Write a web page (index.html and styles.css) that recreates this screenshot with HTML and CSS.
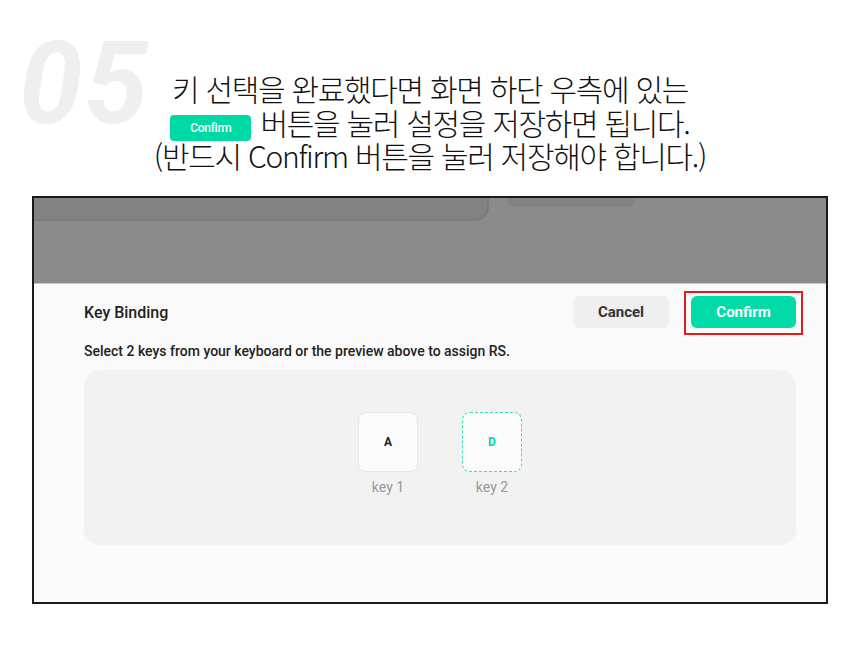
FILE: index.html
```html
<!DOCTYPE html>
<html lang="ko">
<head>
    <meta charset="UTF-8">
    <meta name="viewport" content="width=device-width, initial-scale=1.0">
    <title>Key Binding 05</title>
    <link rel="stylesheet" href="styles.css">
</head>
<body>
    <div class="step">
        <div class="step-num">05</div>
        <div class="step-text">
            <div class="step-line">키 선택을 완료했다면 화면 하단 우측에 있는</div>
            <div class="step-line"><span class="badge">Confirm</span> 버튼을 눌러 설정을 저장하면 됩니다.</div>
            <div class="step-line">(반드시 Confirm 버튼을 눌러 저장해야 합니다.)</div>
        </div>
    </div>
    <div class="shot">
        <div class="backdrop">
            <div class="back-panel"></div>
            <div class="back-pill"></div>
        </div>
        <div class="dialog">
            <div class="dialog-head">
                <div class="dialog-title">Key Binding</div>
                <div class="dialog-buttons">
                    <div class="btn btn-cancel">Cancel</div>
                    <div class="btn btn-confirm">Confirm</div>
                </div>
            </div>
            <div class="dialog-sub">Select 2 keys from your keyboard or the preview above to assign RS.</div>
            <div class="key-area">
                <div class="key-item">
                    <div class="key">A</div>
                    <div class="key-label">key 1</div>
                </div>
                <div class="key-item">
                    <div class="key key-active">D</div>
                    <div class="key-label">key 2</div>
                </div>
            </div>
        </div>
    </div>
</body>
</html>
```

FILE: styles.css
```css
body{
    margin: 0;
    background-color: white;
    font-family: Roboto, "Noto Sans CJK KR", sans-serif;
}
.step{
    position: relative;
    height: 196px;
}
.step-num{
    position: absolute;
    left: 19px;
    top: 16px;
    font-family: Roboto, sans-serif;
    font-size: 114px;
    font-weight: bold;
    font-style: italic;
    color: #efefef;
    letter-spacing: 2px;
    line-height: 1.2;
}
.step-text{
    position: relative;
    padding-top: 72px;
    text-align: center;
    font-family: "Noto Sans CJK KR", sans-serif;
    font-weight: 300;
    font-size: 30px;
    letter-spacing: -1.3px;
    color: #111;
}
.step-line{
    height: 33.5px;
    line-height: 33.5px;
}
.badge{
    display: inline-block;
    width: 81px;
    height: 26px;
    line-height: 26px;
    background-color: #00d9a6;
    border-radius: 4px;
    color: white;
    font-family: Roboto, sans-serif;
    font-weight: 500;
    font-size: 12px;
    letter-spacing: -0.3px;
    vertical-align: 3px;
    margin-right: 2px;
}
.shot{
    margin-left: 32px;
    width: 792px;
    height: 404px;
    border: 2px solid #1a1a1a;
    display: flex;
    flex-direction: column;
}
.backdrop{
    height: 85px;
    background-color: #8b8b8b;
    border-bottom: 1px solid #c4c4c4;
    display: flex;
    align-items: flex-start;
    gap: 18px;
}
.back-panel{
    width: 453px;
    height: 21px;
    background-color: #828282;
    border-bottom: 2px solid #7b7b7b;
    border-right: 2px solid #7b7b7b;
    border-bottom-right-radius: 14px;
}
.back-pill{
    width: 127px;
    height: 9px;
    background-color: #838383;
    border-radius: 0 0 6px 6px;
}
.dialog{
    flex: 1;
    background-color: #fafafa;
    padding: 12px 30px 0 50px;
}
.dialog-head{
    display: flex;
    justify-content: space-between;
    align-items: center;
}
.dialog-title{
    font-size: 16px;
    font-weight: 500;
    color: #222;
}
.dialog-buttons{
    display: flex;
    gap: 22px;
}
.btn{
    height: 32px;
    line-height: 32px;
    border-radius: 6px;
    text-align: center;
    font-size: 15px;
    font-weight: bold;
}
.btn-cancel{
    width: 96px;
    background-color: #efefef;
    color: #333;
}
.btn-confirm{
    position: relative;
    width: 105px;
    background-color: #00dba7;
    color: white;
}
/* red highlight box from the guide */
.btn-confirm::after{
    content: "";
    position: absolute;
    left: -7px;
    right: -7px;
    top: -5px;
    bottom: -7px;
    border: 2px solid #e41b1b;
}
.dialog-sub{
    margin-top: 15px;
    font-size: 14px;
    font-weight: 500;
    color: #222;
}
.key-area{
    margin-top: 11px;
    height: 175px;
    background-color: #f2f2f2;
    border-radius: 16px;
    display: flex;
    justify-content: center;
    align-items: flex-start;
    gap: 44px;
    padding-top: 42px;
    box-sizing: border-box;
}
.key-item{
    display: flex;
    flex-direction: column;
    align-items: center;
}
.key{
    width: 58px;
    height: 58px;
    line-height: 58px;
    text-align: center;
    background-color: #fbfbfb;
    border: 1px solid #e6e6e6;
    border-radius: 8px;
    font-size: 12px;
    font-weight: bold;
    color: #222;
}
.key-active{
    border: 1px dashed #2fe0ba;
    color: #00d9a6;
}
.key-label{
    margin-top: 7px;
    font-size: 14px;
    color: #999;
}
```
